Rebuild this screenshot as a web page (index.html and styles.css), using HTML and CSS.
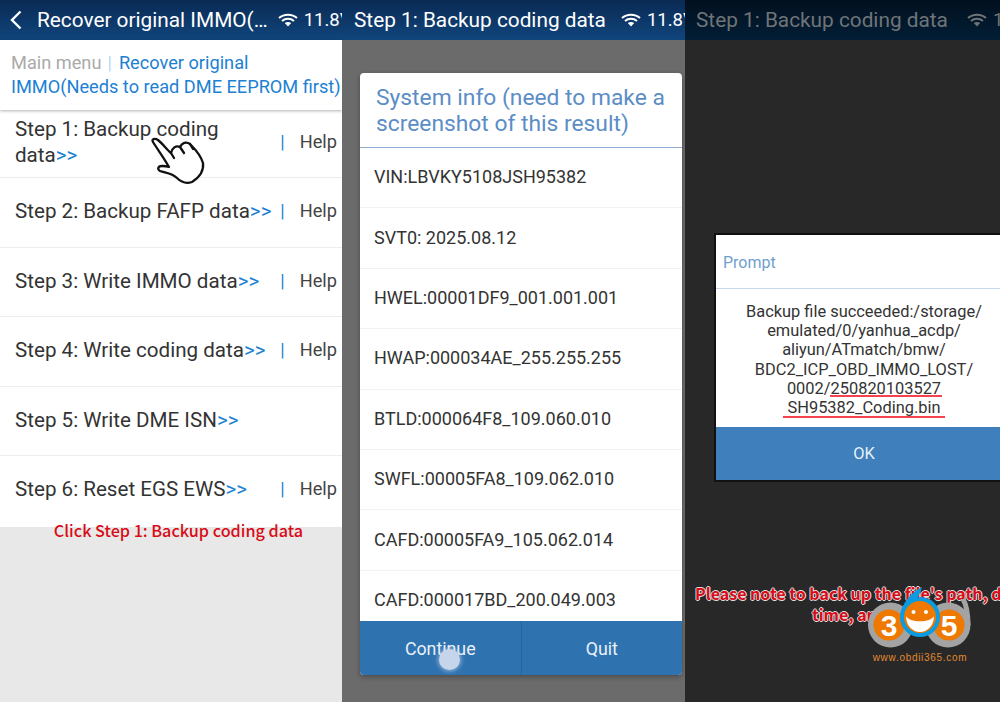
FILE: index.html
```html
<!DOCTYPE html>
<html lang="en">
<head>
<meta charset="utf-8">
<title>Recover original IMMO</title>
<link rel="stylesheet" href="styles.css">
</head>
<body>
<div class="stage">
  <section class="panel panel-menu">
    <header class="topbar">
      <svg class="back" viewBox="0 0 12 20"><path d="M10.5 1.5 L2 10 L10.5 18.5"/></svg>
      <span class="top-title">Recover original IMMO(…</span>
      <svg class="wifi" viewBox="0 0 20 14"><path d="M1 5 C6 0.5 14 0.5 19 5 M4 8 C7.5 5 12.5 5 16 8"/><path class="wifi-fan" d="M6.8 10 C8.6 8.6 11.4 8.6 13.2 10 L10 13.6 Z"/></svg>
      <span class="volt">11.8V</span>
    </header>
    <div class="crumb">
      <div><span class="crumb-main">Main menu</span><span class="crumb-sep">|</span><span>Recover original</span></div>
      <div>IMMO(Needs to read DME EEPROM first)</div>
    </div>
    <ul class="steps">
      <li class="step"><span class="step-text">Step 1: Backup coding data<b>&gt;&gt;</b></span><span class="bar">|</span><span class="help">Help</span></li>
      <li class="step"><span class="step-text">Step 2: Backup FAFP data<b>&gt;&gt;</b></span><span class="bar">|</span><span class="help">Help</span></li>
      <li class="step"><span class="step-text">Step 3: Write IMMO data<b>&gt;&gt;</b></span><span class="bar">|</span><span class="help">Help</span></li>
      <li class="step"><span class="step-text">Step 4: Write coding data<b>&gt;&gt;</b></span><span class="bar">|</span><span class="help">Help</span></li>
      <li class="step"><span class="step-text">Step 5: Write DME ISN<b>&gt;&gt;</b></span></li>
      <li class="step"><span class="step-text">Step 6: Reset EGS EWS<b>&gt;&gt;</b></span><span class="bar">|</span><span class="help">Help</span></li>
    </ul>
    <p class="caption">Click Step 1: Backup coding data</p>
    <svg class="hand" viewBox="0 0 70 60">
      <path d="M8 12 C6 9 10 8 13 10 C18 14 22 20 26 23 C27 18 31 15 35 17 C37 13 41 11 45 14 C51 20 56 26 58 33 C59 41 55 47 47 52 C41 54 36 52 32 48 C27 43 21 43 15 41 C12 39 13 36 17 36 C19 36 21 36 24 37 C19 28 13 20 8 12 Z"/>
      <path d="M26 23 L29 28 M35 17 L39 23 M45 14 L48 19"/>
    </svg>
  </section>

  <section class="panel panel-info">
    <header class="topbar">
      <span class="top-title">Step 1: Backup coding data</span>
      <svg class="wifi" viewBox="0 0 20 14"><path d="M1 5 C6 0.5 14 0.5 19 5 M4 8 C7.5 5 12.5 5 16 8"/><path class="wifi-fan" d="M6.8 10 C8.6 8.6 11.4 8.6 13.2 10 L10 13.6 Z"/></svg>
      <span class="volt">11.8V</span>
    </header>
    <div class="dialog">
      <h2 class="dialog-title">System info (need to make a screenshot of this result)</h2>
      <ul class="info-list">
        <li>VIN:LBVKY5108JSH95382</li>
        <li>SVT0: 2025.08.12</li>
        <li>HWEL:00001DF9_001.001.001</li>
        <li>HWAP:000034AE_255.255.255</li>
        <li>BTLD:000064F8_109.060.010</li>
        <li>SWFL:00005FA8_109.062.010</li>
        <li>CAFD:00005FA9_105.062.014</li>
        <li>CAFD:000017BD_200.049.003</li>
      </ul>
      <div class="actions">
        <span class="action">Continue</span>
        <span class="action action-right">Quit</span>
      </div>
    </div>
    <span class="touch"></span>
  </section>

  <section class="panel panel-prompt">
    <header class="topbar topbar-dim">
      <span class="top-title">Step 1: Backup coding data</span>
      <svg class="wifi" viewBox="0 0 20 14"><path d="M1 5 C6 0.5 14 0.5 19 5 M4 8 C7.5 5 12.5 5 16 8"/><path class="wifi-fan" d="M6.8 10 C8.6 8.6 11.4 8.6 13.2 10 L10 13.6 Z"/></svg>
      <span class="volt">11.8V</span>
    </header>
    <div class="prompt">
      <h3 class="prompt-title">Prompt</h3>
      <p class="prompt-body">Backup file succeeded:/storage/<br>emulated/0/yanhua_acdp/<br>aliyun/ATmatch/bmw/<br>BDC2_ICP_OBD_IMMO_LOST/<br>0002/<span class="red-a">250820103527</span><br><span class="red-b">SH95382_Coding.bin</span></p>
      <div class="prompt-ok">OK</div>
    </div>
    <p class="note">Please note to back up the file's path, date,<span class="note-2">time, and</span></p>
  </section>

  <div class="logo">
    <svg class="logo-mark" viewBox="0 0 104 64">
      <path class="ring-tail" d="M95 13 C99 20 100 30 100 39"/>
      <circle class="ring" cx="22.5" cy="39" r="22.5"/>
      <circle class="ring" cx="80" cy="39" r="22.5"/>
      <circle class="disc" cx="21" cy="39" r="15.5"/>
      <circle class="disc" cx="81" cy="39" r="15.5"/>
      <path class="six-tail" d="M54 1 C44 6 34 16 32 30 L48 14 C51 9 53 5 54 1 Z"/>
      <circle class="six" cx="52" cy="31" r="20"/>
      <circle class="face" cx="52" cy="31" r="16"/>
      <circle class="eye" cx="45.5" cy="26" r="2"/>
      <circle class="eye" cx="58" cy="26" r="2"/>
      <path class="mouth" d="M38 30 C41 37 63 37 66 30 C66 40 59 46 52 46 C45 46 38 40 38 30 Z"/>
      <text class="digit" x="21" y="50" text-anchor="middle">3</text>
      <text class="digit" x="81" y="50" text-anchor="middle">5</text>
    </svg>
    <span class="logo-url">www.obdii365.com</span>
  </div>
</div>
</body>
</html>
```

FILE: styles.css
```css
* { box-sizing: border-box; }
html, body { margin: 0; padding: 0; }
body { width: 1000px; height: 702px; overflow: hidden; background: #000; font-family: Roboto, "Liberation Sans", sans-serif; color: #333; }
ul { list-style: none; margin: 0; padding: 0; }
h2, h3, p { margin: 0; font-weight: 400; }

.stage { position: relative; display: flex; width: 1000px; height: 702px; }
.panel { position: relative; display: flex; flex-direction: column; height: 702px; overflow: hidden; }
.panel-menu { width: 342px; background: #e8e8e8; }
.panel-info { width: 343px; background: #6b6b6b; }
.panel-prompt { width: 315px; background: #282828; }

.topbar { display: flex; align-items: center; flex: none; height: 40px; padding-left: 12px; background: linear-gradient(#0a2a54, #10457c); color: #fff; white-space: nowrap; font-size: 20.8px; }
.topbar-dim { padding-left: 11px; background: linear-gradient(#02101e, #021e36); color: #6f7478; }
.back { flex: none; width: 12px; height: 20px; margin: 0 15px 0 -2px; fill: none; stroke: currentColor; stroke-width: 2.4; }
.top-title { flex: none; }
.wifi { flex: none; width: 20px; height: 14px; margin-left: 15px; }
.panel-menu .wifi { margin-left: 10px; }
.topbar-dim .wifi { margin-left: 19px; }
.wifi path { fill: none; stroke: currentColor; stroke-width: 2; }
.wifi .wifi-fan { fill: currentColor; stroke: none; }
.volt { margin-left: 6px; font-size: 18.5px; flex: none; }

.crumb { flex: none; height: 70px; padding: 11px 0 0 11px; background: #fff; box-shadow: 0 1px 3px rgba(0,0,0,.3); position: relative; font-size: 18.2px; line-height: 24px; color: #1c81d3; white-space: nowrap; }
.crumb-main { color: #aaa; }
.crumb-sep { color: #b9d6ee; margin: 0 7px 0 6px; }

.steps { background: #fff; }
.step { display: flex; align-items: center; height: 69.5px; padding: 0 5px 2px 15px; border-bottom: 1px solid #ececec; font-size: 20.6px; line-height: 26px; color: #333; }
.step:first-child { height: 68px; padding-bottom: 4px; }
.step:last-child { border-bottom: 0; height: 71px; padding-bottom: 6px; }
.step-text { flex: 1; min-width: 0; }
.step-text b { font-weight: 400; color: #1c81d3; }
.bar { color: #1c81d3; font-size: 18px; margin-right: 15px; }
.help { font-size: 18.2px; color: #444; }
.caption { position: absolute; left: 0; top: 519px; width: 100%; padding-left: 15px; text-align: center; font-family: "Noto Sans CJK SC", "Noto Sans", sans-serif; font-size: 16.2px; font-weight: 500; line-height: 22px; color: #d80c18; white-space: nowrap; }
.hand { position: absolute; left: 145px; top: 130px; width: 70px; height: 60px; fill: #fff; stroke: #111; stroke-width: 2.3; stroke-linejoin: round; stroke-linecap: round; }

.dialog { display: flex; flex-direction: column; width: 322px; height: 602px; margin: 33px 0 0 18px; background: #fff; border-radius: 4px; overflow: hidden; box-shadow: 0 2px 5px rgba(0,0,0,.3); }
.dialog-title { flex: none; height: 75px; padding: 12px 16px 0; border-bottom: 1px solid #8fb0d3; font-size: 22.8px; line-height: 25.5px; color: #5b8dc6; }
.info-list { flex: 1; min-height: 0; overflow: hidden; }
.info-list li { height: 60.4px; padding: 0 14px 2px; display: flex; align-items: center; font-size: 18px; border-bottom: 1px solid #f3f3f3; color: #333; }
.info-list li:last-child { border-bottom: 0; }
.actions { display: flex; flex: none; height: 54px; background: #2f72b0; color: #e8f1f8; font-size: 17.8px; }
.action { flex: 1; display: flex; align-items: center; justify-content: center; }
.action-right { border-left: 1px solid #27639b; }
.touch { position: absolute; left: 97px; top: 649px; width: 21px; height: 21px; border-radius: 50%; background: #c6d5ea; box-shadow: 0 0 4px 1px rgba(210,225,245,.6); }

.prompt { flex: none; width: 300px; height: 249px; margin: 193px 0 0 29px; background: #fff; border: 2px solid #111; display: flex; flex-direction: column; }
.prompt-title { flex: none; height: 54px; padding: 18px 0 0 7px; border-bottom: 1px solid #c5d7e8; font-size: 16px; color: #6f9fce; }
.prompt-body { flex: 1; padding-top: 13px; text-align: center; font-size: 16.4px; line-height: 19.2px; color: #333; white-space: nowrap; }
.red-a, .red-b { position: relative; }
.red-a::after, .red-b::after { content: ""; position: absolute; height: 2px; background: #f2434f; }
.red-a::after { left: -1px; right: -1px; bottom: 1px; }
.red-b::after { left: -5px; right: -5px; bottom: -1px; }
.prompt-ok { flex: none; height: 53px; display: flex; align-items: center; justify-content: center; background: #3f7fbc; color: #e8f1f8; font-size: 16.4px; }
.note { position: absolute; left: 10px; top: 583px; white-space: nowrap; font-family: "Noto Sans CJK SC", "Noto Sans", sans-serif; font-size: 16px; font-weight: 700; line-height: 21px; color: #d80c18; text-shadow: -1px 0 #ddd, 1px 0 #ddd, 0 -1px #ddd, 0 1px #ddd; }
.note-2 { display: block; padding-left: 117px; }

.logo { position: absolute; left: 868px; top: 586px; width: 104px; display: flex; flex-direction: column; align-items: center; }
.logo-mark { width: 104px; height: 64px; }
.ring { fill: #a3a3a3; }
.ring-tail { fill: none; stroke: #a3a3a3; stroke-width: 5; }
.disc { fill: #ee7800; }
.six, .six-tail { fill: #0a9be0; }
.face { fill: #ee7800; }
.eye { fill: #fff; }
.mouth { fill: #fff; }
.digit { fill: #fff; font-family: "Liberation Sans", sans-serif; font-weight: 700; font-size: 30px; }
.logo-url { margin-top: 2px; font-family: "Liberation Sans", sans-serif; font-size: 10px; letter-spacing: .7px; color: #e08a30; white-space: nowrap; }
```
